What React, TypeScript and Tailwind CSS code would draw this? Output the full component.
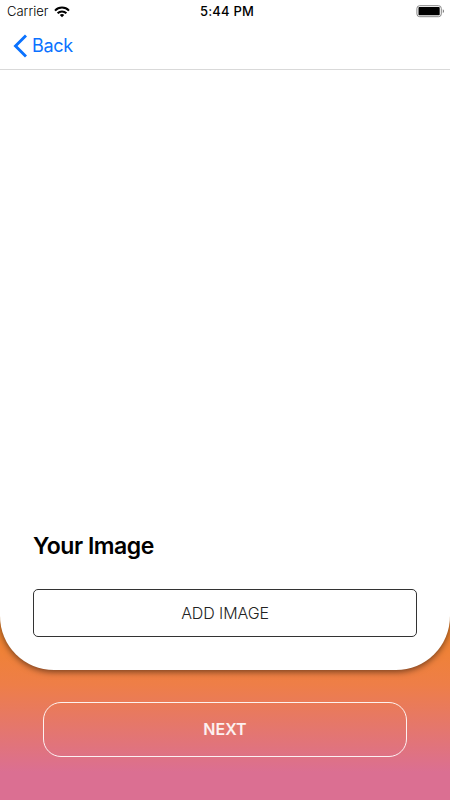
import React from "react";

function WifiIcon() {
  return (
    <svg width="16" height="12" viewBox="0 0 16 12" fill="none" stroke="#000" strokeWidth="2">
      <path d="M1 4.6C4.9 0.6 11.1 0.6 15 4.6" />
      <path d="M3.6 7.2C6 4.8 10 4.8 12.4 7.2" />
      <path d="M8 11.2L5.8 9C7 7.8 9 7.8 10.2 9Z" fill="#000" stroke="none" />
    </svg>
  );
}

function BatteryIcon() {
  return (
    <svg width="29" height="13" viewBox="0 0 29 13" fill="none">
      <rect x="0.9" y="0.7" width="24.4" height="11" rx="2.8" stroke="#858585" />
      <rect x="2.5" y="2.1" width="21.2" height="8.2" rx="0.8" fill="#000" />
      <path d="M26.8 4.3C28.4 4.9 28.4 7.6 26.8 8.2Z" fill="#777" />
    </svg>
  );
}

function StatusBar() {
  return (
    <div className="grid h-[22px] grid-cols-3 items-center pt-px text-[13px] leading-none text-black">
      <div className="flex items-center gap-[6px] pl-[7px]">
        <span className="font-light">Carrier</span>
        <WifiIcon />
      </div>
      <span className="pl-1 text-center font-medium tracking-[0.2px]">5:44 PM</span>
      <div className="flex justify-end pr-[5px]">
        <BatteryIcon />
      </div>
    </div>
  );
}

function NavBar() {
  return (
    <div className="flex h-12 items-center border-b border-[#d9d9d9] pl-[13px]">
      <button type="button" className="flex items-center gap-[5px] text-[18px] leading-none text-[#0a72ff]">
        <svg width="14" height="24" viewBox="0 0 14 24" fill="none" stroke="currentColor" strokeWidth="2.9">
          <path d="M13 1.5L2.5 12L13 22.5" />
        </svg>
        <span className="pt-px tracking-[-0.3px]">Back</span>
      </button>
    </div>
  );
}

export default function App() {
  return (
    <div className="flex h-[800px] w-[450px] flex-col overflow-hidden bg-[linear-gradient(to_bottom,#f08528_620px,#ee7e48_685px,#db6f92_772px)] font-['Inter','Liberation_Sans',sans-serif]">
      <main className="flex h-[670px] shrink-0 flex-col rounded-b-[54px] bg-white shadow-[0_2px_6px_rgba(0,0,0,0.5)]">
        <StatusBar />
        <NavBar />
        <div className="flex flex-1 flex-col justify-end px-[33px] pb-[33px]">
          <h1 className="mb-[28px] text-[23px] leading-[30px] font-semibold tracking-[-0.45px] text-black">Your Image</h1>
          <button
            type="button"
            className="h-12 w-[384px] rounded-[5px] border border-[#333] text-[16px] font-light tracking-[-0.1px] text-[#222]"
          >
            ADD IMAGE
          </button>
        </div>
      </main>
      <div className="flex flex-1 justify-center pt-8">
        <button
          type="button"
          className="h-[55px] w-[364px] rounded-[18px] border border-white/90 pb-px text-[16px] font-semibold text-white/90"
        >
          NEXT
        </button>
      </div>
    </div>
  );
}
